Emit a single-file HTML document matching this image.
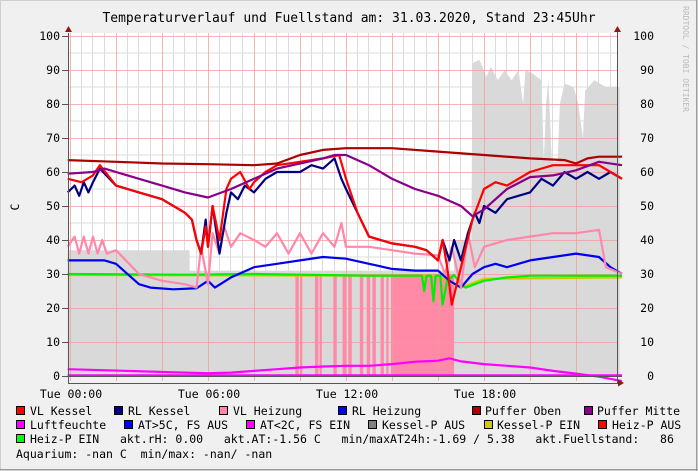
<!DOCTYPE html>
<html><head><meta charset="utf-8"><style>
body{margin:0;background:#f0f0f0;}
svg{display:block;font-family:"DejaVu Sans Mono","Liberation Mono",monospace;}
.l{font-size:11.5px;fill:#000;}
</style></head><body>
<svg width="698" height="471" viewBox="0 0 698 471">
<rect x="0" y="0" width="698" height="471" fill="#f0f0f0"/>
<rect x="0.5" y="0.5" width="697" height="470" fill="none" stroke="#cfcfcf"/>
<line x1="0" y1="469.5" x2="698" y2="469.5" stroke="#9a9a9a"/>
<line x1="696.5" y1="0" x2="696.5" y2="471" stroke="#9a9a9a"/>
<text x="349" y="22" text-anchor="middle" style="font-size:13px">Temperaturverlauf und Fuellstand am: 31.03.2020, Stand 23:45Uhr</text>
<text transform="translate(683,6) rotate(90)" style="font-size:8px;fill:#bbb">RRDTOOL / TOBI OETIKER</text>
<text x="16" y="210" text-anchor="middle" transform="rotate(-90 16 207)" class="l">C</text>
<rect x="68" y="33" width="549" height="344" fill="#fff"/>
<g stroke-width="1">
<g stroke="#dcdcdc">
<path d="M68 53H617M68 87H617M68 121H617M68 155H617M68 189H617M68 223H617M68 257H617M68 291H617M68 325H617M68 359H617"/>
<path d="M81.5 33V377M92.5 33V377M104.5 33V377M127.5 33V377M138.5 33V377M150.5 33V377M173.5 33V377M184.5 33V377M196.5 33V377M219.5 33V377M230.5 33V377M242.5 33V377M265.5 33V377M276.5 33V377M288.5 33V377M311.5 33V377M322.5 33V377M334.5 33V377M357.5 33V377M368.5 33V377M380.5 33V377M403.5 33V377M414.5 33V377M426.5 33V377M449.5 33V377M460.5 33V377M472.5 33V377M495.5 33V377M506.5 33V377M518.5 33V377M541.5 33V377M552.5 33V377M564.5 33V377M587.5 33V377M598.5 33V377M610.5 33V377"/>
</g>
</g>
<g transform="matrix(23 0 0 -3.4 70 376)">
<path fill="#d9d9d9" d="M-0.1 0V37H5.2V31H16.7V40H17.45L17.5 92L17.8 93L18.1 88L18.3 91L18.6 87L18.9 90L19.2 87L19.5 90L19.7 80L19.8 90L20.1 89L20.5 87L20.6 63L20.7 80L20.8 87L20.95 63L21.2 63L21.3 80L21.5 86L21.9 85L22.1 80L22.3 70L22.4 84L22.8 87L23.3 85L23.9 85V0Z"/>
<path fill="#ff8aa8" d="M9.8 0V30H9.95V0ZM10.0 0V30H10.1V0ZM10.65 0V30H10.8V0ZM10.85 0V30H10.95V0ZM11.45 0V30H11.6V0ZM11.85 0V30H12.0V0ZM12.1 0V30H12.25V0ZM12.6 0V30H12.75V0ZM12.9 0V30H13.05V0ZM13.15 0V30H13.3V0ZM13.5 0V30H13.65V0ZM13.75 0V30H13.85V0ZM13.95 0V30H16.7V0Z"/>
</g>
<g stroke="#f29a9a" stroke-opacity="0.75" stroke-width="1">
<path d="M68 36.5H617M68 70.5H617M68 104.5H617M68 138.5H617M68 172.5H617M68 206.5H617M68 240.5H617M68 274.5H617M68 308.5H617M68 342.5H617M68 376.5H617"/>
<path d="M70.5 33V381M116.5 33V381M162.5 33V381M208.5 33V381M254.5 33V381M300.5 33V381M346.5 33V381M392.5 33V381M438.5 33V381M484.5 33V381M530.5 33V381M576.5 33V381"/>
</g>
<g transform="matrix(23 0 0 -3.4 70 376)" fill="none" stroke-width="2.2" stroke-linejoin="round">
<polyline vector-effect="non-scaling-stroke" stroke="#ff00ff" points="-0.1,0.2 24,0.2"/>
<polyline vector-effect="non-scaling-stroke" stroke="#ff00ff" points="-0.1,2 2,1.6 4,1.2 6,0.8 7,1 8,1.5 9,2 10,2.5 11,2.8 12,3 13,3 14,3.5 15,4.2 16,4.5 16.5,5.2 17,4.3 18,3.5 19,3 20,2.5 21,1.5 22,0.7 23,-0.2 24,-1.5"/>
<polyline vector-effect="non-scaling-stroke" stroke="#cccc00" points="-0.1,29.7 16,29.5 17,26 18,28.6 24,29"/>
<polyline vector-effect="non-scaling-stroke" stroke="#00ee00" points="-0.1,30 5,29.8 8,30 12,29.6 13,29.5 15.3,29.5 15.4,25 15.5,29.5 15.7,29.5 15.8,22 15.9,29.5 16.1,29.5 16.2,21 16.4,28 16.7,29.7 17,27 17.2,26 18,28 19,29 20,29.5 24,29.5"/>
<polyline vector-effect="non-scaling-stroke" stroke="#0000ee" points="-0.1,34 1.5,34 2,33 3,27 3.5,26 4.5,25.5 5.5,25.8 6,28 6.3,26 7,29 8,32 9,33 10,34 11,35 12,34.5 13,33 14,31.5 15,31 16,31 16.5,28 17,26 17.5,30 18,32 18.5,33 19,32 20,34 21,35 22,36 23,35 23.5,32 24,30"/>
<polyline vector-effect="non-scaling-stroke" stroke="#ff88aa" points="-0.1,38 0.2,41 0.4,36 0.6,41 0.8,36 1,41 1.2,36 1.4,40 1.6,36 2,37 3,30 4,28 5,27 5.5,26 5.7,38 6,27 6.2,42 6.5,36 6.7,44 7,38 7.4,42 8,40 8.5,38 9,42 9.5,36 10,42 10.5,36 11,42 11.5,38 11.8,45 12,38 13,38 14,37 15,36 16,35.5 16.3,30 16.6,38 17,26 17.3,42 17.6,32 18,38 19,40 20,41 21,42 22,42 23,43 23.3,32 24,30"/>
<polyline vector-effect="non-scaling-stroke" stroke="#000080" points="-0.1,54 0.2,56 0.4,53 0.6,57 0.8,54 1,57 1.3,61 2,56 3,54 4,52 5,48 5.3,46 5.5,40 5.7,36 5.9,46 6,38 6.2,50 6.5,36 6.8,48 7,54 7.3,52 7.6,56 8,54 8.5,58 9,60 10,60 10.5,62 11,61 11.5,64 11.8,58 12,55 12.5,48 13,41 14,39 15,38 15.5,37 16,34 16.2,40 16.5,34 16.7,40 17,34 17.3,42 17.6,48 17.8,45 18,50 18.5,48 19,52 20,54 20.5,58 21,56 21.5,60 22,58 22.5,60 23,58 23.5,60 24,58"/>
<polyline vector-effect="non-scaling-stroke" stroke="#ff0000" points="-0.1,58 0.5,57 1,59 1.3,62 2,56 3,54 4,52 5,48 5.3,46 5.5,40 5.7,36 5.9,44 6,38 6.2,50 6.5,40 6.8,55 7,58 7.4,60 7.8,55 8,57 8.5,60 9,62 10,63 11,64 11.7,65 12,58 12.5,48 13,41 14,39 15,38 15.5,37 16,34 16.2,40 16.4,32 16.6,21 17,32 17.5,46 18,55 18.5,57 19,56 20,60 21,62 22,62 23,62 23.5,60 24,58"/>
<polyline vector-effect="non-scaling-stroke" stroke="#880088" points="-0.1,59.5 1,60 1.5,61 2,60 3,58 4,56 5,54 6,52.5 7,55 8,58 9,61 10,62.5 11,64 11.5,65 12,65 13,62 14,58 15,55 16,53 17,50 17.5,47 18,49 19,55 20,58.5 21,59 22,60.5 23,63 24,62"/>
<polyline vector-effect="non-scaling-stroke" stroke="#aa0000" points="-0.1,63.5 2,63 4,62.5 6,62.3 8,62 9,62.5 10,65 11,66.5 12,67 14,67 16,66 18,65 20,64 21.5,63.5 22,62.5 22.5,64 23,64.5 24,64.5"/>
</g>
<g stroke="#555" stroke-width="1">
<path d="M68.5 33V383M62 376.5H622"/>
<path d="M62 36.5H68M62 70.5H68M62 104.5H68M62 138.5H68M62 172.5H68M62 206.5H68M62 240.5H68M62 274.5H68M62 308.5H68M62 342.5H68"/>
<path d="M617.5 28V383"/>
</g>
<path d="M65 32L68.5 26L72 32Z" fill="#8b1a1a"/>
<path d="M614 32L617.5 26L621 32Z" fill="#8b1a1a"/>
<path d="M618 379.5L624 383L618 386.5Z" fill="#8b1a1a"/>
<line x1="68" y1="383.5" x2="618" y2="383.5" stroke="#555"/>
<g class="l" text-anchor="end">
<text x="60" y="40">100</text><text x="60" y="74">90</text><text x="60" y="108">80</text><text x="60" y="142">70</text><text x="60" y="176">60</text><text x="60" y="210">50</text><text x="60" y="244">40</text><text x="60" y="278">30</text><text x="60" y="312">20</text><text x="60" y="346">10</text><text x="60" y="380">0</text>
</g>
<g class="l" text-anchor="end">
<text x="654" y="40">100</text><text x="654" y="74">90</text><text x="654" y="108">80</text><text x="654" y="142">70</text><text x="654" y="176">60</text><text x="654" y="210">50</text><text x="654" y="244">40</text><text x="654" y="278">30</text><text x="654" y="312">20</text><text x="654" y="346">10</text><text x="654" y="380">0</text>
</g>
<g class="l" text-anchor="middle">
<text x="71" y="398">Tue 00:00</text><text x="209" y="398">Tue 06:00</text><text x="347" y="398">Tue 12:00</text><text x="485" y="398">Tue 18:00</text>
</g>
<g stroke="#000" stroke-width="1">
<rect x="16.5" y="406.5" width="8" height="8" fill="#ff0000"/>
<rect x="114.5" y="406.5" width="8" height="8" fill="#000080"/>
<rect x="219.5" y="406.5" width="8" height="8" fill="#ff88aa"/>
<rect x="338.5" y="406.5" width="8" height="8" fill="#0000ff"/>
<rect x="472.5" y="406.5" width="8" height="8" fill="#aa0000"/>
<rect x="584.5" y="406.5" width="8" height="8" fill="#880088"/>
<rect x="16.5" y="420.5" width="8" height="8" fill="#ff00ff"/>
<rect x="124.5" y="420.5" width="8" height="8" fill="#0000ff"/>
<rect x="246.5" y="420.5" width="8" height="8" fill="#ff00ff"/>
<rect x="368.5" y="420.5" width="8" height="8" fill="#808080"/>
<rect x="484.5" y="420.5" width="8" height="8" fill="#cccc00"/>
<rect x="598.5" y="420.5" width="8" height="8" fill="#ff0000"/>
<rect x="16.5" y="434.5" width="8" height="8" fill="#00ff00"/>
</g>
<g class="l">
<text x="30" y="415">VL Kessel</text>
<text x="128" y="415">RL Kessel</text>
<text x="233" y="415">VL Heizung</text>
<text x="352" y="415">RL Heizung</text>
<text x="485" y="415">Puffer Oben</text>
<text x="597" y="415">Puffer Mitte</text>
<text x="30" y="429">Luftfeuchte</text>
<text x="138" y="429">AT&gt;5C, FS AUS</text>
<text x="260" y="429">AT&lt;2C, FS EIN</text>
<text x="382" y="429">Kessel-P AUS</text>
<text x="497" y="429">Kessel-P EIN</text>
<text x="612" y="429">Heiz-P AUS</text>
<text x="30" y="443" xml:space="preserve">Heiz-P EIN   akt.rH: 0.00   akt.AT:-1.56 C   min/maxAT24h:-1.69 / 5.38   akt.Fuellstand:   86</text>
<text x="16" y="458" xml:space="preserve">Aquarium: -nan C  min/max: -nan/ -nan</text>
</g>
</svg>
</body></html>
